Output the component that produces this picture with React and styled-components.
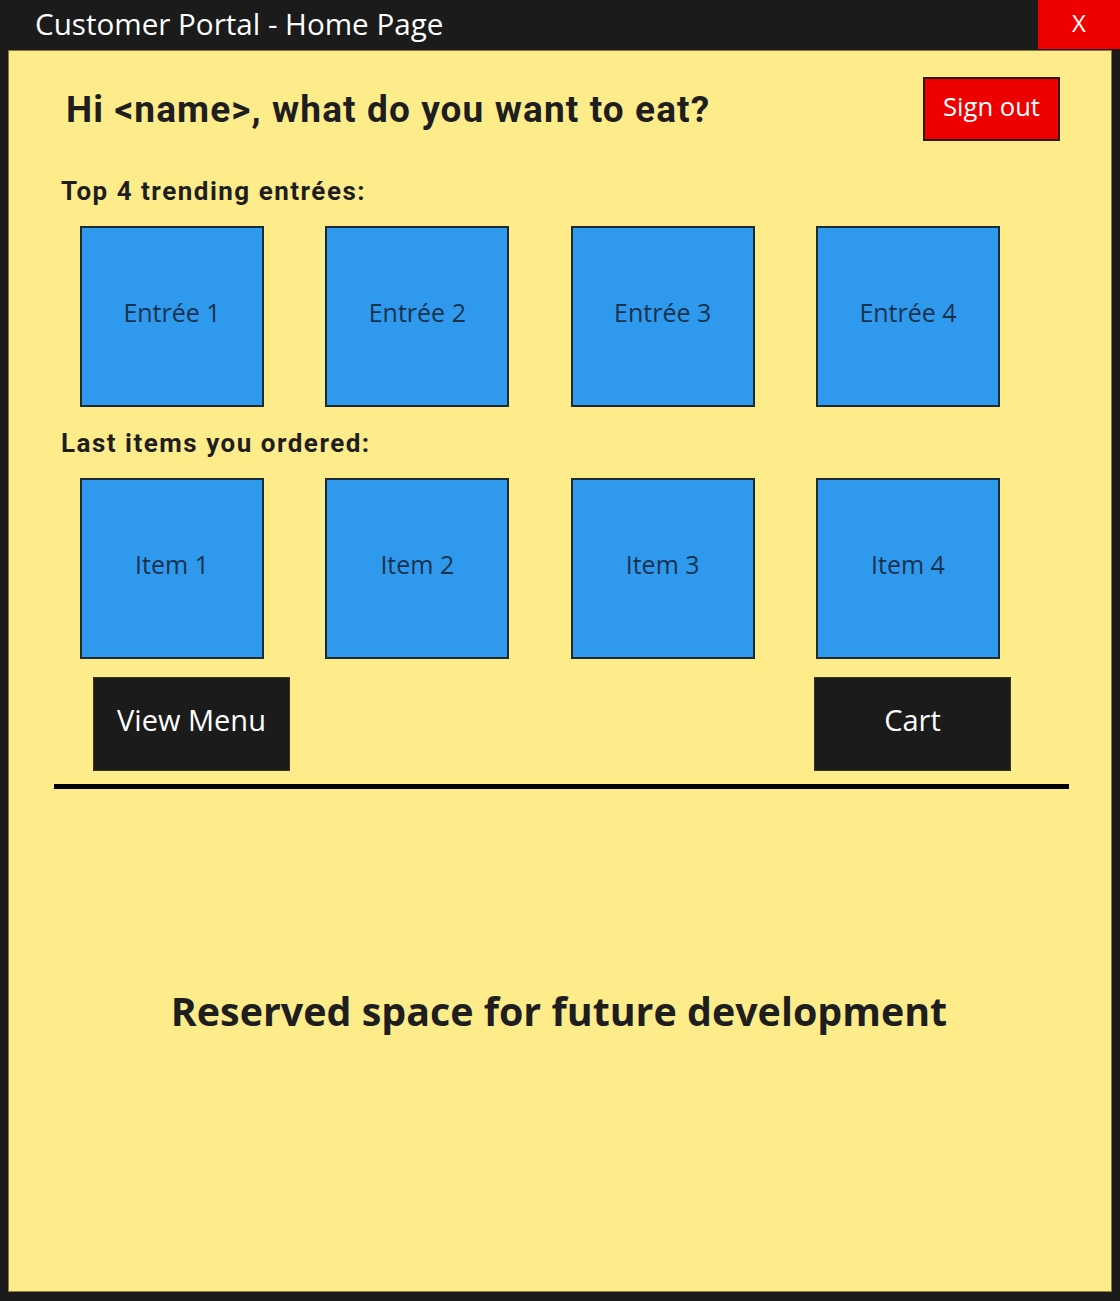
import React from "react";
import styled, { createGlobalStyle } from "styled-components";

const GlobalStyle = createGlobalStyle`
  html, body {
    margin: 0;
    padding: 0;
    background: #1b1b1b;
  }
`;

const entrees = ["Entrée 1", "Entrée 2", "Entrée 3", "Entrée 4"];
const items = ["Item 1", "Item 2", "Item 3", "Item 4"];

const App = () => {
  return (
    <Window>
      <GlobalStyle />
      <TitleBar>
        <Title>Customer Portal - Home Page</Title>
        <CloseButton>X</CloseButton>
      </TitleBar>
      <Panel>
        <Header>
          <Greeting>Hi &lt;name&gt;, what do you want to eat?</Greeting>
          <SignOut>Sign out</SignOut>
        </Header>
        <SectionLabel $top={34}>Top 4 trending entrées:</SectionLabel>
        <TileRow>
          {entrees.map((e) => (
            <Tile key={e}>{e}</Tile>
          ))}
        </TileRow>
        <SectionLabel $top={20}>Last items you ordered:</SectionLabel>
        <TileRow>
          {items.map((i) => (
            <Tile key={i}>{i}</Tile>
          ))}
        </TileRow>
        <ActionRow>
          <DarkButton>View Menu</DarkButton>
          <DarkButton>Cart</DarkButton>
        </ActionRow>
        <Divider />
        <Reserved>Reserved space for future development</Reserved>
      </Panel>
    </Window>
  );
};

export default App;

const Window = styled.div`
  width: 1120px;
  height: 1301px;
  background: #1b1b1b;
  display: flex;
  flex-direction: column;
  overflow: hidden;
`;

const TitleBar = styled.div`
  height: 50px;
  display: flex;
  align-items: flex-start;
  justify-content: space-between;
  flex-shrink: 0;
`;

const Title = styled.div`
  font-family: "Open Sans", sans-serif;
  font-size: 29.6px;
  color: #ffffff;
  padding-left: 35px;
  line-height: 48px;
`;

const CloseButton = styled.div`
  width: 82px;
  height: 49px;
  background: #ee0000;
  color: #ffffff;
  font-family: "Open Sans", sans-serif;
  font-size: 24px;
  display: flex;
  align-items: center;
  justify-content: center;
  padding-bottom: 5px;
  box-sizing: border-box;
`;

const Panel = styled.div`
  margin: 0 8px 9px 8px;
  height: 1242px;
  box-sizing: border-box;
  background: #feec8b;
  border: 1px solid #857a3a;
  display: flex;
  flex-direction: column;
`;

const Header = styled.div`
  display: flex;
  align-items: center;
  justify-content: space-between;
  padding: 26px 51px 0 57px;
`;

const Greeting = styled.h1`
  margin: 0;
  font-family: Roboto, sans-serif;
  font-weight: 700;
  font-size: 37px;
  letter-spacing: 1.1px;
  color: #1e1e1e;
`;

const SignOut = styled.button`
  width: 137px;
  height: 64px;
  background: #ee0000;
  border: 2px solid #2a1a10;
  color: #ffffff;
  font-family: "Open Sans", sans-serif;
  font-size: 25.6px;
  padding: 0 0 6px 0;
  box-sizing: border-box;
`;

const SectionLabel = styled.h2`
  margin: ${(p) => p.$top}px 0 0 52px;
  font-family: Roboto, sans-serif;
  font-weight: 700;
  font-size: 26px;
  letter-spacing: 1.5px;
  line-height: 32px;
  color: #1e1e1e;
`;

const TileRow = styled.div`
  display: flex;
  justify-content: space-between;
  width: 920px;
  margin: 19px 0 0 71px;
`;

const Tile = styled.div`
  width: 184px;
  height: 181px;
  box-sizing: border-box;
  background: #2f99ee;
  border: 2px solid #1c2a36;
  display: flex;
  align-items: center;
  justify-content: center;
  font-family: "Open Sans", sans-serif;
  font-size: 25px;
  color: #17324c;
  padding-bottom: 9px;
`;

const ActionRow = styled.div`
  display: flex;
  justify-content: space-between;
  width: 918px;
  margin: 18px 0 0 84px;
`;

const DarkButton = styled.button`
  width: 197px;
  height: 94px;
  background: #1b1b1b;
  border: 1px solid #3a3520;
  color: #ffffff;
  font-family: "Open Sans", sans-serif;
  font-size: 29px;
  padding: 0 0 9px 0;
  box-sizing: border-box;
`;

const Divider = styled.div`
  height: 5px;
  width: 1015px;
  background: #000000;
  margin: 13px 0 0 45px;
`;

const Reserved = styled.div`
  margin-top: 195px;
  text-align: center;
  font-family: "Open Sans", sans-serif;
  font-weight: 700;
  font-size: 39.4px;
  color: #1e1e1e;
  padding-right: 2px;
`;
